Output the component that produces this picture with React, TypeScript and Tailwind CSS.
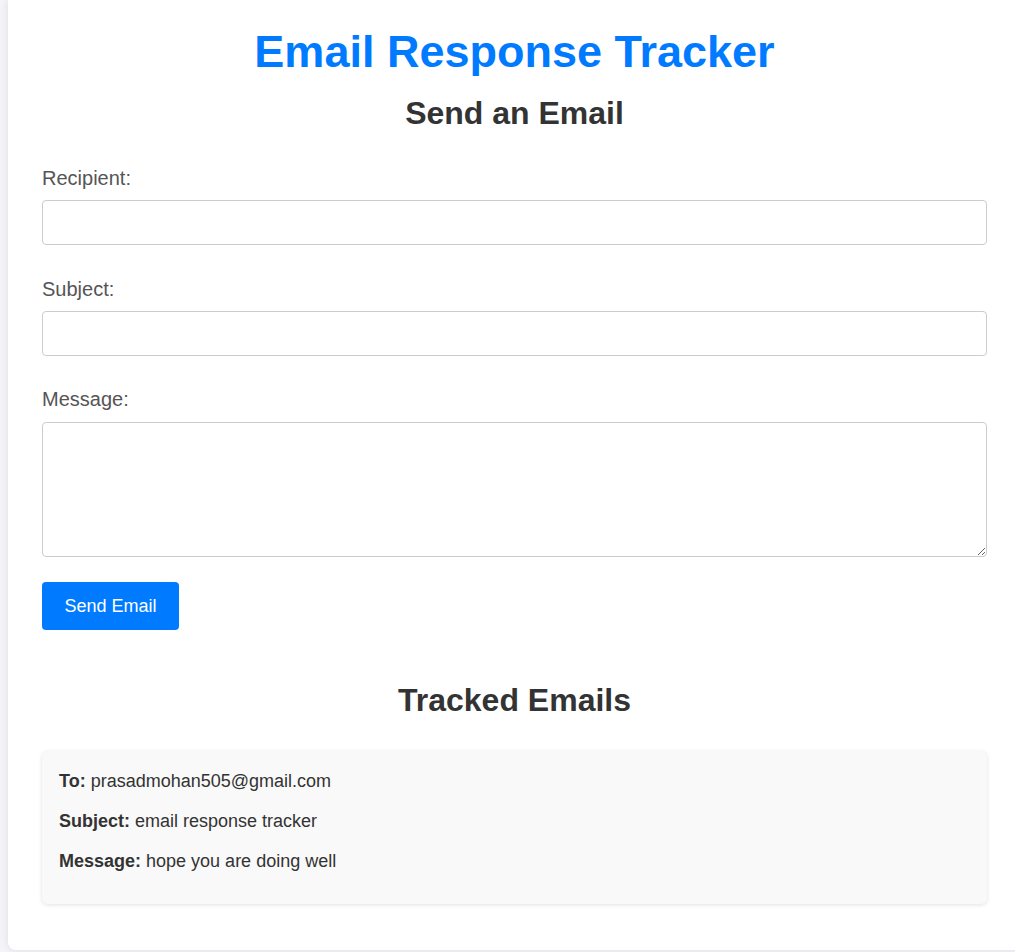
export default function App() {
  return (
    <div className="min-h-[952px] bg-[#f4f4f9] overflow-hidden font-['Liberation_Sans',Arial,sans-serif]">
      <div className="ml-2 w-[1013px] bg-white rounded-bl-lg shadow-[0_0_10px_rgba(0,0,0,0.1)] px-[34px] pt-[26px] pb-[46px]">
        <h1 className="text-center text-[45px] leading-[51px] font-bold text-[#007bff]">
          Email Response Tracker
        </h1>
        <h2 className="mt-[18px] text-center text-[32px] leading-[37px] font-bold text-[#333]">
          Send an Email
        </h2>

        <form className="mt-[35px] flex flex-col" onSubmit={(e) => e.preventDefault()}>
          <label className="text-[20px] leading-[23px] text-[#555]">Recipient:</label>
          <input
            type="email"
            className="mt-[10px] h-[45px] w-full rounded border border-[#ccc] px-2 text-[18px]"
          />

          <label className="mt-[33px] text-[20px] leading-[23px] text-[#555]">Subject:</label>
          <input
            type="text"
            className="mt-[10px] h-[45px] w-full rounded border border-[#ccc] px-2 text-[18px]"
          />

          <label className="mt-[32px] text-[20px] leading-[23px] text-[#555]">Message:</label>
          <textarea className="mt-[11px] h-[135px] w-full rounded border border-[#ccc] p-2 text-[18px] block" />

          <div className="mt-[25px]">
            <button
              type="submit"
              className="h-[48px] w-[137px] rounded bg-[#007bff] text-[18px] text-white"
            >
              Send Email
            </button>
          </div>
        </form>

        <h2 className="mt-[52px] text-center text-[32px] leading-[37px] font-bold text-[#333]">
          Tracked Emails
        </h2>

        <div className="mt-[32px] rounded-md bg-[#f9f9f9] shadow-[0_1px_4px_rgba(0,0,0,0.12)] pl-[17px] pr-4 pt-[20px] pb-[32px] text-[18px] leading-[21px] text-[#333]">
          <p>
            <strong>To:</strong> prasadmohan505@gmail.com
          </p>
          <p className="mt-[19px]">
            <strong>Subject:</strong> email response tracker
          </p>
          <p className="mt-[19px]">
            <strong>Message:</strong> hope you are doing well
          </p>
        </div>
      </div>
    </div>
  );
}
